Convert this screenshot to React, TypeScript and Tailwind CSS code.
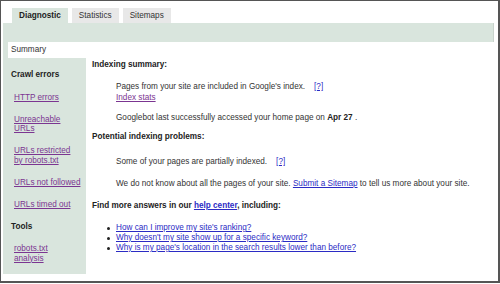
const GREEN = 'bg-[#d9e5dd]'

const TABS = [
  { label: 'Diagnostic', active: true },
  { label: 'Statistics', active: false },
  { label: 'Sitemaps', active: false },
]

const HELP_LINKS = [
  "How can I improve my site's ranking?",
  "Why doesn't my site show up for a specific keyword?",
  "Why is my page's location in the search results lower than before?",
]

function SideLink({ lines, first }: { lines: string[]; first?: boolean }) {
  return (
    <div className={`${first ? 'mt-[12.5px]' : 'mt-[12.5px]'} pl-[11px] leading-[9.5px]`}>
      {lines.map((l) => (
        <div key={l} className="whitespace-nowrap">
          <a className="text-[#7b3591] underline">{l}</a>
        </div>
      ))}
    </div>
  )
}

function Help() {
  return <a className="text-[#2b2bc4] underline">[?]</a>
}

export default function App() {
  return (
    <div className="w-[500px] h-[283px] box-border border-t border-l border-r-2 border-b-2 border-[#555] bg-white font-['Liberation_Sans',Arial,sans-serif] text-[8.2px] leading-[10px] text-[#333] overflow-hidden">
      <div className="flex gap-[4px] pl-[11px] pt-[7px]">
        {TABS.map((t) => (
          <div
            key={t.label}
            className={`h-[15px] px-[7px] flex items-center ${
              t.active ? `${GREEN} font-bold text-[#222]` : 'bg-[#e8e8e8] text-[#333]'
            }`}
          >
            {t.label}
          </div>
        ))}
      </div>

      <div className="ml-[2px] w-[491px]">
        <div className={`h-[19px] ${GREEN} border-r border-[#c9d3cc]`} />
        <div className={`${GREEN} pl-[5px]`}>
          <div className="bg-white h-[16px] pl-[3px] flex items-center">Summary</div>
        </div>

        <div className="flex">
          <div className={`w-[83px] h-[216px] shrink-0 ${GREEN}`}>
            <div className="pt-[12px] pl-[8px] font-bold text-[#222]">Crawl errors</div>
            <SideLink lines={['HTTP errors']} first />
            <SideLink lines={['Unreachable', 'URLs']} />
            <SideLink lines={['URLs restricted', 'by robots.txt']} />
            <SideLink lines={['URLs not followed']} />
            <SideLink lines={['URLs timed out']} />
            <div className="mt-[12.5px] pl-[8px] font-bold text-[#222]">Tools</div>
            <SideLink lines={['robots.txt', 'analysis']} />
          </div>

          <div className="flex-1 pl-[6px] pt-[2px]">
            <div className="font-bold text-[#222]">Indexing summary:</div>
            <div className="mt-[12px] pl-[24px]">
              Pages from your site are included in Google's index.
              <span className="ml-[9px]">
                <Help />
              </span>
            </div>
            <div className="mt-[1px] pl-[24px]">
              <a className="text-[#7b3591] underline">Index stats</a>
            </div>
            <div className="mt-[10px] pl-[24px]">
              Googlebot last successfully accessed your home page on <b className="text-[#222]">Apr 27</b> .
            </div>

            <div className="mt-[9px] font-bold text-[#222]">Potential indexing problems:</div>
            <div className="mt-[15px] pl-[24px]">
              Some of your pages are partially indexed.
              <span className="ml-[9px]">
                <Help />
              </span>
            </div>
            <div className="mt-[12px] pl-[24px] whitespace-nowrap">
              We do not know about all the pages of your site.{' '}
              <a className="text-[#2b2bc4] underline">Submit a Sitemap</a> to tell us more about your site.
            </div>

            <div className="mt-[12px] font-bold text-[#222]">
              Find more answers in our <a className="text-[#2b2bc4] underline">help center</a>, including:
            </div>
            <ul className="mt-[12px] pl-[15px]">
              {HELP_LINKS.map((h) => (
                <li key={h} className="flex items-center">
                  <span className="w-[3px] h-[3px] rounded-full bg-[#222] shrink-0" />
                  <a className="ml-[6px] text-[#2b2bc4] underline whitespace-nowrap">{h}</a>
                </li>
              ))}
            </ul>
          </div>
        </div>
      </div>
    </div>
  )
}
